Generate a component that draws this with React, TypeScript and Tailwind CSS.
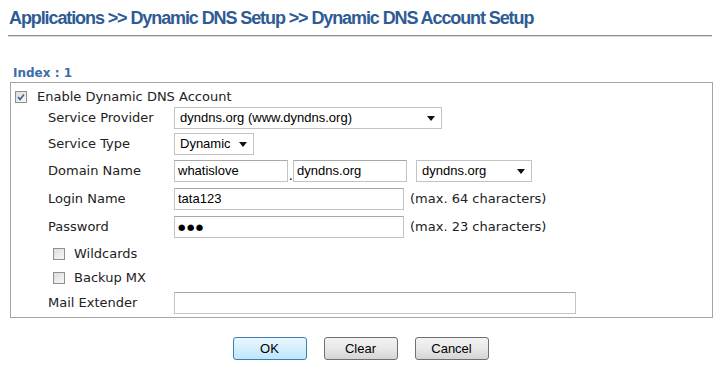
import React from "react";

const verdana = { fontFamily: '"DejaVu Sans", Verdana, sans-serif' };

const CheckBox = ({ checked = false }: { checked?: boolean }) => (
  <span className="relative inline-block w-[12px] h-[12px] border border-[#8f8f8f] bg-gradient-to-br from-[#dcdcdc] to-[#f8f8f8] shrink-0">
    {checked && (
      <svg viewBox="0 0 10 10" className="absolute left-0 top-0 w-[10px] h-[10px]">
        <path d="M2 5 L4 7.5 L8 2.5" fill="none" stroke="#3d5b9a" strokeWidth="1.6" />
      </svg>
    )}
  </span>
);

const Arrow = () => (
  <svg viewBox="0 0 8 5" className="w-[8px] h-[5px] shrink-0">
    <path d="M0 0 L8 0 L4 5 Z" fill="#111" />
  </svg>
);

const Select = ({ value, width }: { value: string; width: string }) => (
  <div className={`${width} h-[22px] border border-[#c3c3c3] bg-white flex items-center justify-between pl-[5px] pr-[6px] text-[13px] text-black font-['Liberation_Sans',Arial,sans-serif]`}>
    <span>{value}</span>
    <Arrow />
  </div>
);

const Input = ({ value, width, password = false }: { value?: string; width: string; password?: boolean }) => (
  <div className={`${width} h-[22px] border border-[#c3c3c3] border-t-[#a8a8a8] bg-white flex items-center pl-[3px] text-[13px] text-black font-['Liberation_Sans',Arial,sans-serif]`}>
    {password ? (
      <span className="text-[8.5px] tracking-[1.5px] text-black font-['DejaVu_Sans',sans-serif]">●●●</span>
    ) : (
      value
    )}
  </div>
);

const Row = ({ label, className, children }: { label: string; className: string; children?: React.ReactNode }) => (
  <div className={`flex items-center h-[22px] ${className}`}>
    <div className="w-[163px] pl-[37px] shrink-0 text-[13px] text-[#222] whitespace-nowrap" style={verdana}>
      {label}
    </div>
    {children}
  </div>
);

const Btn = ({ label, primary = false }: { label: string; primary?: boolean }) => (
  <button
    className={`w-[74px] h-[23px] rounded-[3px] border text-[13px] text-black font-['Liberation_Sans',Arial,sans-serif] ${
      primary
        ? "border-[#3c7fb1] bg-gradient-to-b from-[#eaf6fd] to-[#bee6fd]"
        : "border-[#707070] bg-gradient-to-b from-[#f2f2f2] via-[#e8e8e8] to-[#d4d4d4]"
    }`}
  >
    {label}
  </button>
);

export default function App() {
  return (
    <div className="w-[716px] h-[367px] bg-white overflow-hidden">
      <div className="pl-[9px] pt-[7px] h-[28px] text-[18px] font-bold text-[#2f5b95] tracking-[-1.1px] font-['Liberation_Sans_Narrow','Arial_Narrow','Liberation_Sans',Arial,sans-serif] whitespace-nowrap leading-[22px]">
        Applications &gt;&gt; Dynamic DNS Setup &gt;&gt; Dynamic DNS Account Setup
      </div>
      <div className="mx-[8px] mt-[7px] w-[704px] h-[2px] border-t border-[#8d8d8d] border-b border-b-[#dcdcdc]" />

      <div className="pl-[13px] mt-[27px] h-[18px] text-[12px] font-bold text-[#3b6daa] leading-[18px]" style={verdana}>
        Index : 1
      </div>

      <div className="ml-[10px] w-[703px] h-[236px] border border-[#a5a5a5]">
        <div className="flex items-center h-[20px] mt-[4px] pl-[4px] gap-[10px]">
          <CheckBox checked />
          <span className="text-[13px] text-[#222]" style={verdana}>
            Enable Dynamic DNS Account
          </span>
        </div>

        <Row label="Service Provider" className="mt-[0px]">
          <Select value="dyndns.org (www.dyndns.org)" width="w-[268px]" />
        </Row>
        <Row label="Service Type" className="mt-[4px]">
          <Select value="Dynamic" width="w-[80px]" />
        </Row>
        <Row label="Domain Name" className="mt-[5px]">
          <Input value="whatislove" width="w-[114px]" />
          <span className="w-[5px] text-[13px] self-end pb-[1px] pl-[1px] leading-[12px]">.</span>
          <Input value="dyndns.org" width="w-[114px]" />
          <div className="ml-[9px]">
            <Select value="dyndns.org" width="w-[116px]" />
          </div>
        </Row>
        <Row label="Login Name" className="mt-[6px]">
          <Input value="tata123" width="w-[230px]" />
          <span className="ml-[6px] text-[13px] text-[#222]" style={verdana}>
            (max. 64 characters)
          </span>
        </Row>
        <Row label="Password" className="mt-[6px]">
          <Input width="w-[230px]" password />
          <span className="ml-[6px] text-[13px] text-[#222]" style={verdana}>
            (max. 23 characters)
          </span>
        </Row>
        <div className="flex items-center h-[20px] mt-[6px] pl-[42px] gap-[9px]">
          <CheckBox />
          <span className="text-[13px] text-[#222]" style={verdana}>
            Wildcards
          </span>
        </div>
        <div className="flex items-center h-[20px] mt-[4px] pl-[42px] gap-[9px]">
          <CheckBox />
          <span className="text-[13px] text-[#222]" style={verdana}>
            Backup MX
          </span>
        </div>
        <Row label="Mail Extender" className="mt-[4px]">
          <Input width="w-[402px]" />
        </Row>
      </div>

      <div className="flex justify-center gap-[17px] mt-[19px] pl-[6px] -ml-[1px]">
        <Btn label="OK" primary />
        <Btn label="Clear" />
        <Btn label="Cancel" />
      </div>
    </div>
  );
}
